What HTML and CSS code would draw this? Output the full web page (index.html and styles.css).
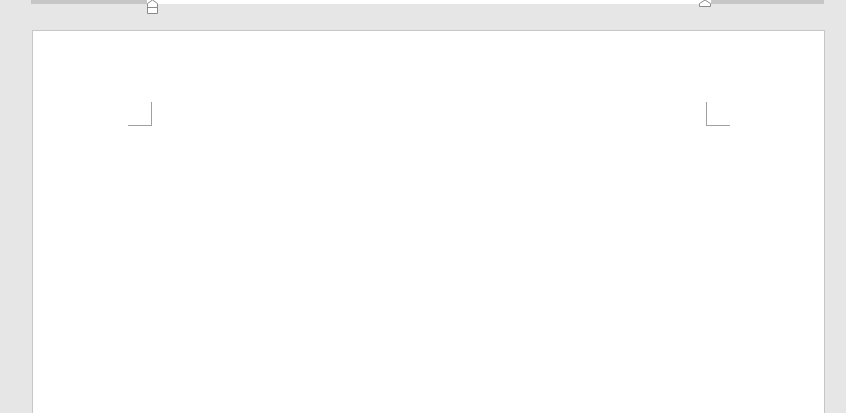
FILE: index.html
```html
<!DOCTYPE html>
<html>
<head>
<meta charset="utf-8">
<link rel="stylesheet" href="styles.css">
</head>
<body>
<div class="ruler">
  <div class="ruler-margin ruler-left"></div>
  <div class="ruler-text"></div>
  <div class="ruler-margin ruler-right"></div>
  <svg class="marker marker-left" width="11" height="14" viewBox="0 0 11 14">
    <path d="M0.5 13.5 V3.5 L5.5 0 L10.5 3.5 V13.5 Z" fill="#fff" stroke="#8a8a8a" stroke-width="1"/>
    <path d="M0.5 7.5 H10.5" stroke="#8a8a8a" stroke-width="1"/>
  </svg>
  <svg class="marker marker-right" width="12" height="7" viewBox="0 0 12 7">
    <path d="M0.5 6.5 V3.5 L6 0 L11.5 3.5 V6.5 Z" fill="#fff" stroke="#8a8a8a" stroke-width="1"/>
  </svg>
</div>
<div class="page">
  <div class="corners">
    <div class="corner corner-left"></div>
    <div class="corner corner-right"></div>
  </div>
</div>
</body>
</html>
```

FILE: styles.css
```css
html, body {
  margin: 0;
  padding: 0;
  height: 100%;
  overflow: hidden;
}
body {
  background: #e6e6e6;
  font-family: "Liberation Sans", Arial, sans-serif;
}
.ruler {
  position: relative;
  display: flex;
  height: 4px;
  margin-left: 31px;
  width: 793px;
}
.ruler-margin {
  background: #c6c6c6;
}
.ruler-left {
  width: 116px;
}
.ruler-text {
  flex: 1;
  background: #ffffff;
}
.ruler-right {
  width: 113px;
}
.marker {
  position: absolute;
  top: 0;
  display: block;
}
.marker-left {
  left: 116px;
}
.marker-right {
  left: 668px;
}
.page {
  margin-top: 26px;
  margin-left: 32px;
  width: 793px;
  height: 383px;
  box-sizing: border-box;
  background: #ffffff;
  border: 1px solid #c6c6c6;
  border-bottom: none;
  padding: 71px 94px 0 95px;
}
.corners {
  display: flex;
  justify-content: space-between;
}
.corner {
  width: 23px;
  height: 23px;
  border-bottom: 1px solid #a0a0a0;
}
.corner-left {
  border-right: 1px solid #a0a0a0;
}
.corner-right {
  border-left: 1px solid #a0a0a0;
}
```
